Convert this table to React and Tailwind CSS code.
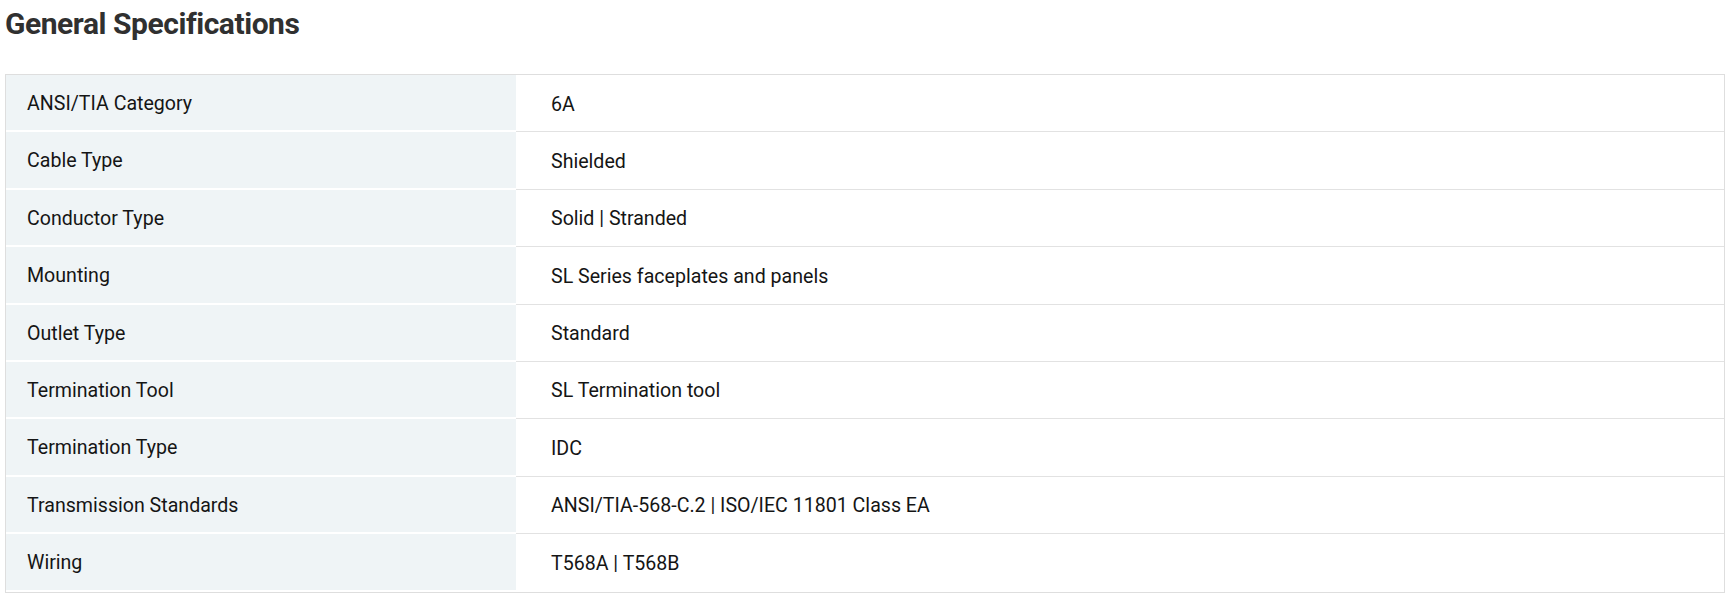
import React from 'react'

const specs = [
  ['ANSI/TIA Category', '6A'],
  ['Cable Type', 'Shielded'],
  ['Conductor Type', 'Solid | Stranded'],
  ['Mounting', 'SL Series faceplates and panels'],
  ['Outlet Type', 'Standard'],
  ['Termination Tool', 'SL Termination tool'],
  ['Termination Type', 'IDC'],
  ['Transmission Standards', 'ANSI/TIA-568-C.2 | ISO/IEC 11801 Class EA'],
  ['Wiring', 'T568A | T568B'],
]

const App = () => {
  return (
    <div className="w-[1734px] h-[598px] bg-white font-['Roboto',sans-serif] overflow-hidden">
      <h2 className="pl-[5px] pt-[7px] h-[74px] text-[30px] leading-[34px] font-bold tracking-[-0.45px] text-[#303030]">
        General Specifications
      </h2>

      <div className="ml-[5px] w-[1720px] border border-[#dedede]">
        {specs.map(([label, value], i) => {
          const last = i === specs.length - 1
          return (
            <div key={label} className="flex h-[57.4px]">
              <div className="w-[510px] flex items-center pl-[21px] pt-[2px] bg-[#eff4f6] text-[19.6px] text-[#151515] border-b-2 border-white">
                {label}
              </div>
              <div
                className={
                  'flex-1 flex items-center pl-[35px] pt-[2px] text-[19.6px] text-[#151515] ' +
                  (last ? '' : 'border-b border-[#e2e2e2]')
                }
              >
                {value}
              </div>
            </div>
          )
        })}
      </div>
    </div>
  )
}

export default App
